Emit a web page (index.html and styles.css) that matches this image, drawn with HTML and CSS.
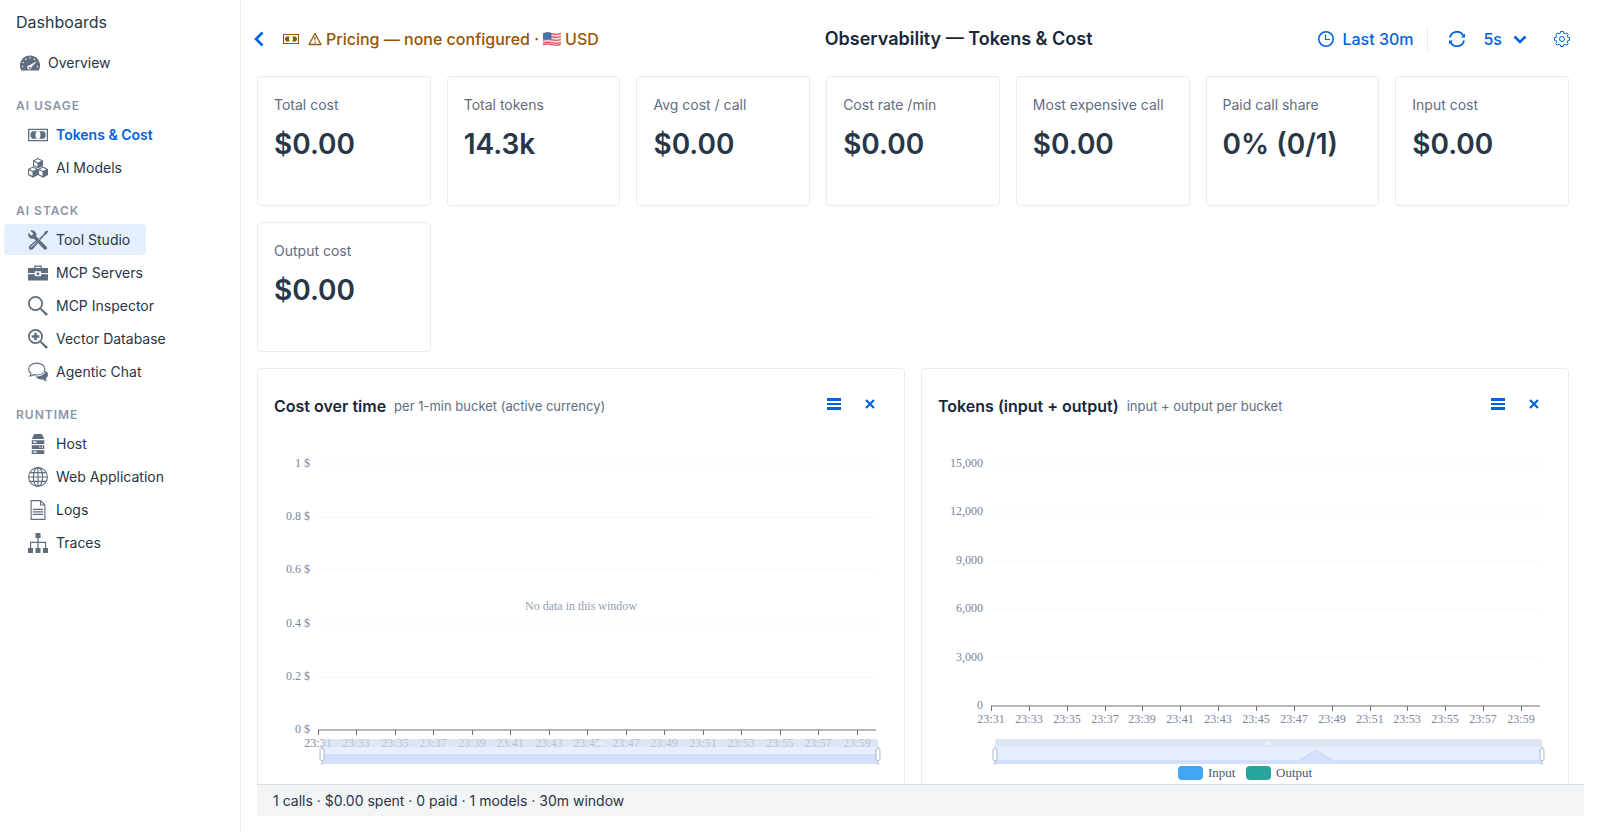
FILE: index.html
```html
<!DOCTYPE html>
<html lang="en">
<head>
    <meta charset="UTF-8">
    <meta name="viewport" content="width=device-width, initial-scale=1.0">
    <title>Observability — Tokens &amp; Cost</title>
    <link rel="stylesheet" href="styles.css">
</head>
<body>
    <aside class="sidebar">
        <h1 class="brand">Dashboards</h1>
        <nav>
            <a href="#overview" class="nav-item top">
                <svg class="icon" viewBox="0 0 16 16"><path d="M8 2a8 8 0 0 0-7.6 10.6c.2.6.5 1.4.5 1.4h14.2s.3-.8.5-1.4A8 8 0 0 0 8 2z"/><g fill="#fff"><circle cx="8" cy="3.8" r=".6"/><circle cx="4.6" cy="5" r=".6"/><circle cx="2.4" cy="7.6" r=".6"/><circle cx="11.4" cy="5" r=".6"/><circle cx="2" cy="10.8" r=".6"/><circle cx="14" cy="10.8" r=".6"/><path d="M13.6 6.4l-4.4 5a1.7 1.7 0 1 1-1.5-1.6z"/></g><circle cx="7.8" cy="11.8" r=".8"/></svg>
                Overview
            </a>

            <h2 class="nav-label">AI USAGE</h2>
            <a href="#tokens" class="nav-item current">
                <svg class="icon" viewBox="0 0 16 16"><path d="M0 3v10h16V3zm15 9H1V4h14z"/><path d="M6 8c0-1.700.6-2.600 1.300-3H3v1H2v4h1v1h4.300C6.600 10.600 6 9.700 6 8zM8.700 5c.7.4 1.300 1.300 1.300 3s-.6 2.600-1.300 3H13v-1h1V6h-1V5z"/></svg>
                Tokens &amp; Cost
            </a>
            <a href="#models" class="nav-item">
                <svg class="icon" viewBox="0 0 16 16"><path d="M8 0l4 2v4.300L8 8.200 4 6.300V2zM4 6.800l4 2v4.700l-4 2.200-4-2.200V8.800zM12 6.800l4 2v4.700l-4 2.200-4-2.200V8.800z"/><g fill="#fff"><path d="M8 .9l2.700 1.300L8 3.500 5.300 2.200zM4.800 3l2.800 1.300v2.700L4.800 5.700zM4 7.700L6.700 9 4 10.300 1.300 9zM.8 9.800l2.800 1.300v3.200L.8 12.900zM12 7.700L14.700 9 12 10.300 9.300 9zM8.800 9.800l2.800 1.300v3.200l-2.800-1.400z"/></g></svg>
                AI Models
            </a>

            <h2 class="nav-label">AI STACK</h2>
            <a href="#tools" class="nav-item hover">
                <svg class="icon" viewBox="0 0 16 16"><path d="M1.700.4L4 2.600 3.700 4 2.500 4.400.3 2.200C-.2 4 .3 5.300 1.300 6.200c1 .9 2.300 1 3.300.6l8.200 8.500a1.400 1.400 0 0 0 2-2L6.500 5c.5-1.200.3-2.500-.6-3.500C4.900.4 3.300 0 1.700.4z"/><path d="M15.300.3l.8.9-1.200 2-1.200.6L9.800 7.900l-1-1 4-4 .5-1.300zM6 8.300l2 2-3.800 4.600c-.8.9-2.100 1.200-3 .4-.9-.9-.7-2.300.2-3z"/><path d="M2.200 13.800l4-3.700" stroke="#e4eefd" stroke-width=".8"/></svg>
                Tool Studio
            </a>
            <a href="#servers" class="nav-item">
                <svg class="icon" viewBox="0 0 16 16"><path d="M5 4V2h6v2h5v4h-5.500V6.500h-5V8H0V4zm1 0h4V3H6zM0 9h5.500v1.500h5V9H16v5H0zM7 7.500h2v2H7z"/></svg>
                MCP Servers
            </a>
            <a href="#inspector" class="nav-item">
                <svg class="icon" viewBox="0 0 16 16"><path d="M6 .7a5.300 5.300 0 1 1 0 10.600A5.300 5.300 0 0 1 6 .7z" fill="none" stroke="currentColor" stroke-width="1.400"/><path d="M9.500 10.500l1-1 5.200 4.600c.5.500-1 2-1.500 1.500z"/></svg>
                MCP Inspector
            </a>
            <a href="#vectors" class="nav-item">
                <svg class="icon" viewBox="0 0 16 16"><path d="M6 .7a5.300 5.300 0 1 1 0 10.600A5.300 5.300 0 0 1 6 .7z" fill="none" stroke="currentColor" stroke-width="1.400"/><path d="M9.500 10.500l1-1 5.200 4.600c.5.500-1 2-1.500 1.500zM5 3h2v2h2v2H7v2H5V7H3V5h2z"/></svg>
                Vector Database
            </a>
            <a href="#chat" class="nav-item">
                <svg class="icon" viewBox="0 0 16 16"><path d="M7 .9c3.700 0 6.500 2 6.500 4.800S10.800 10.400 7 10.400c-.9 0-1.700-.1-2.500-.3-.8.7-1.700 1.100-2.900 1.100.6-.6.900-1.300.8-2C1.200 8.400.5 7.100.5 5.700.5 2.900 3.300.9 7 .9z" fill="none" stroke="currentColor" stroke-width=".9"/><path d="M14.200 7c1.100.7 1.800 1.800 1.800 3 0 1.300-.7 2.300-1.700 3 0 .8.200 1.600.9 2.300-1.300 0-2.400-.6-3-1.400-2.700.3-5.100-.5-6.200-2.300C10 11.700 13.400 10 14.200 7z"/></svg>
                Agentic Chat
            </a>

            <h2 class="nav-label">RUNTIME</h2>
            <a href="#host" class="nav-item">
                <svg class="icon" viewBox="0 0 16 16"><path d="M5 0h6l2 4H3zM3 5h10v3H3zM3 9h10v3H3zM3 13h10v3H3z"/><g fill="#fff"><path d="M4 6h3v1H4zM9 10h1v1H9zM11 10h1v1h-1zM4 14h3v1H4z"/></g></svg>
                Host
            </a>
            <a href="#web" class="nav-item">
                <svg class="icon" viewBox="0 0 16 16"><g fill="none" stroke="currentColor" stroke-width=".9"><circle cx="8" cy="8" r="7.500"/><ellipse cx="8" cy="8" rx="3.700" ry="7.500"/><path d="M8 .5v15M.5 8h15M1.700 4.500h12.600M1.700 11.500h12.600"/></g></svg>
                Web Application
            </a>
            <a href="#logs" class="nav-item">
                <svg class="icon" viewBox="0 0 16 16"><path d="M10 .5H2.500v15h11V4zM10 .5V4h3.500" fill="none" stroke="currentColor" stroke-width=".9"/><path d="M4 7h8v.9H4zM4 9h8v.9H4zM4 11h8v.9H4z"/></svg>
                Logs
            </a>
            <a href="#traces" class="nav-item">
                <svg class="icon" viewBox="0 0 16 16"><path d="M6 0h4v4H8.500v3H14.500v5H16v4h-4v-4h1.600V8H8.500v4H10v4H6v-4h1.500V8H2.500v4H4v4H0v-4h1.600V7h5.900V4H6z"/></svg>
                Traces
            </a>
        </nav>
    </aside>

    <main class="main">
        <header class="toolbar">
            <div class="toolbar-group">
                <button class="btn-back" aria-label="Back">
                    <svg width="10" height="16" viewBox="0 0 10 16"><path d="M8.500 1.500L2 8l6.500 6.500" fill="none" stroke="currentColor" stroke-width="2.600"/></svg>
                </button>
                <button class="btn-pricing">
                    <svg class="money" width="16" height="16" viewBox="0 0 16 16"><path d="M0 3v10h16V3zm15 9H1V4h14z"/><path d="M6 8c0-1.300.5-2 1-2.500H3v1H2v3h1v1h4C6.500 10 6 9.300 6 8zM9 5.500c.5.500 1 1.200 1 2.500s-.5 2-1 2.500h4v-1h1v-3h-1v-1z"/></svg>
                    <svg width="14" height="14" viewBox="0 0 14 14"><path d="M7 1.500L13 12.500H1z" fill="none" stroke="currentColor" stroke-width="1.300" stroke-linejoin="round"/><path d="M6.300 5h1.400l-.3 4h-.8zM6.300 10h1.400v1.300H6.300z"/></svg>
                    <span>Pricing — none configured ·</span>
                    <svg width="18" height="14" viewBox="0 0 18 14"><path d="M0 1.500C4-.5 7 .5 10 1.200s5 .8 8-.7v12c-4 2-7 1-10 .3s-5-.8-8 .7z" fill="#f3dfe2"/><path d="M0 2.300C4 .3 7 1.300 10 2s5 .8 8-.7M0 5.300c4-2 7-1 10-.3s5 .8 8-.7M0 8.300c4-2 7-1 10-.3s5 .8 8-.7M0 11.300c4-2 7-1 10-.3s5 .8 8-.7M0 13c4-1.700 7-.8 10-.1s5 .8 8-.7" fill="none" stroke="#df5f6e" stroke-width="1.300"/><path d="M0 1.500C3 0 6 .2 8.500.9V7.500C5 6.800 3 6.700 0 7.800z" fill="#3d74ad"/></svg>
                    <span>USD</span>
                </button>
            </div>
            <h2 class="page-title">Observability — Tokens &amp; Cost</h2>
            <div class="toolbar-group">
                <button class="btn-range">
                    <svg width="16" height="16" viewBox="0 0 16 16"><circle cx="8" cy="8" r="7.200" fill="none" stroke="currentColor" stroke-width="1.600"/><path d="M7.500 3.500V8.500H12" fill="none" stroke="currentColor" stroke-width="1.200"/></svg>
                    Last 30m
                </button>
                <span class="divider"></span>
                <button class="btn-refresh" aria-label="Refresh">
                    <svg width="16" height="16" viewBox="0 0 16 16"><path d="M1 6.500A7.100 7.100 0 0 1 14.300 4.700M15 9.500A7.100 7.100 0 0 1 1.700 11.300" fill="none" stroke="currentColor" stroke-width="1.800"/><path d="M16 2.500V6.500h-4zM0 13.500V9.500h4z"/></svg>
                </button>
                <button class="btn-interval">
                    5s
                    <svg width="14" height="16" viewBox="0 0 14 16"><path d="M1.500 5.500L7 11l5.500-5.500" fill="none" stroke="currentColor" stroke-width="2.500"/></svg>
                </button>
                <button class="btn-settings" aria-label="Settings">
                    <svg width="16" height="16" viewBox="0 0 16 16"><g fill="none" stroke="currentColor"><path d="M6.600.5h2.800l.4 1.900 1.200.5 1.700-1.100 1.500 1.500-1.100 1.700.5 1.200 1.900.4v2.800l-1.900.4-.5 1.200 1.100 1.700-1.500 1.500-1.700-1.100-1.200.5-.4 1.900H6.600l-.4-1.900-1.200-.5-1.700 1.100-1.500-1.500L2.900 11l-.5-1.200-1.900-.4V6.600l1.900-.4L2.900 5 1.800 3.300l1.500-1.500L5 2.900l1.200-.5z"/><circle cx="8" cy="8" r="2.500"/></g></svg>
                </button>
            </div>
        </header>

        <div class="content">
            <section class="stats">
                <div class="stat"><span class="stat-label">Total cost</span><span class="stat-value">$0.00</span></div>
                <div class="stat"><span class="stat-label">Total tokens</span><span class="stat-value">14.3k</span></div>
                <div class="stat"><span class="stat-label">Avg cost / call</span><span class="stat-value">$0.00</span></div>
                <div class="stat"><span class="stat-label">Cost rate /min</span><span class="stat-value">$0.00</span></div>
                <div class="stat"><span class="stat-label">Most expensive call</span><span class="stat-value">$0.00</span></div>
                <div class="stat"><span class="stat-label">Paid call share</span><span class="stat-value">0% (0/1)</span></div>
                <div class="stat"><span class="stat-label">Input cost</span><span class="stat-value">$0.00</span></div>
                <div class="stat"><span class="stat-label">Output cost</span><span class="stat-value">$0.00</span></div>
            </section>

            <section class="charts">
                <article class="chart-card">
                    <div class="chart-header">
                        <h3>Cost over time</h3>
                        <span class="chart-sub">per 1-min bucket (active currency)</span>
                        <div class="chart-actions">
                            <button aria-label="Menu"><svg width="14" height="14" viewBox="0 0 14 14"><path d="M0 1h14v3H0zM0 6h14v2H0zM0 10h14v3H0z"/></svg></button>
                            <button aria-label="Close"><svg width="10" height="10" viewBox="0 0 10 10"><path d="M1 1l8 8M9 1L1 9" stroke="currentColor" stroke-width="2.200"/></svg></button>
                        </div>
                    </div>
                    <div class="chart" id="costChart"></div>
                </article>
                <article class="chart-card">
                    <div class="chart-header">
                        <h3>Tokens (input + output)</h3>
                        <span class="chart-sub">input + output per bucket</span>
                        <div class="chart-actions">
                            <button aria-label="Menu"><svg width="14" height="14" viewBox="0 0 14 14"><path d="M0 1h14v3H0zM0 6h14v2H0zM0 10h14v3H0z"/></svg></button>
                            <button aria-label="Close"><svg width="10" height="10" viewBox="0 0 10 10"><path d="M1 1l8 8M9 1L1 9" stroke="currentColor" stroke-width="2.200"/></svg></button>
                        </div>
                    </div>
                    <div class="chart" id="tokenChart"></div>
                </article>
            </section>
        </div>

        <footer class="status">1 calls · $0.00 spent · 0 paid · 1 models · 30m window</footer>
    </main>
    <script src="charts.js"></script>
</body>
</html>
```
FILE: styles.css
```css
:root {
    --primary: #0062e0;
    --heading: #18273a;
    --text: #283648;
    --text-light: #5f6d80;
    --label: #8a95a6;
    --border: #e9ebee;
    --warning: #995400;
    --highlight: #e4eefd;
}

* {
    margin: 0;
    padding: 0;
    box-sizing: border-box;
}

body {
    display: flex;
    height: 100vh;
    font-family: Inter, "Liberation Sans", sans-serif;
    font-size: 14px;
    color: var(--text);
    background: white;
}

svg {
    fill: currentColor;
    flex-shrink: 0;
}

button {
    display: flex;
    align-items: center;
    border: none;
    background: none;
    color: var(--primary);
    font: inherit;
    cursor: pointer;
}

/* Sidebar */
.sidebar {
    width: 241px;
    flex-shrink: 0;
    padding: 10px 4px;
    border-right: 1px solid var(--border);
}

.brand {
    margin: 0 12px 13px;
    font-size: 16px;
    font-weight: 400;
    line-height: 24px;
}

.nav-item {
    display: flex;
    align-items: center;
    gap: 8px;
    width: fit-content;
    height: 31px;
    margin-bottom: 2px;
    padding: 0 16px 0 24px;
    border-radius: 4px;
    color: var(--text);
    text-decoration: none;
}

.nav-item.top {
    padding-left: 16px;
}

.nav-item.current {
    color: var(--primary);
    font-weight: 600;
}

.nav-item.hover,
.nav-item:hover {
    background: var(--highlight);
}

.icon {
    width: 20px;
    height: 20px;
    color: var(--text-light);
}

.nav-label {
    margin: 18px 12px 3px;
    color: var(--label);
    font-size: 12px;
    font-weight: 600;
    line-height: 20px;
    letter-spacing: 1px;
}

/* Main column */
.main {
    flex: 1;
    min-width: 0;
    display: flex;
    flex-direction: column;
    padding: 0 16px 16px;
}

.toolbar {
    display: flex;
    align-items: center;
    justify-content: space-between;
    height: 76px;
    flex-shrink: 0;
    padding: 1px 14px 0 0;
    font-size: 16px;
    font-weight: 500;
}

.toolbar-group {
    display: flex;
    align-items: center;
}

.btn-back {
    margin: 0 19px 0 -3px;
}

.btn-pricing {
    gap: 4px;
    color: var(--warning);
}

.money {
    margin-right: 5px;
}

.page-title {
    color: var(--heading);
    font-size: 18px;
    font-weight: 600;
}

.btn-range {
    gap: 8px;
}

.divider {
    width: 1px;
    height: 24px;
    margin: 0 21px 0 14px;
    background: var(--border);
}

.btn-interval {
    gap: 11px;
    margin: 0 27px 0 18px;
}

.content {
    flex: 1;
    min-height: 0;
    padding-right: 15px;
    overflow-y: auto;
    scrollbar-width: none;
}

.stats {
    display: grid;
    grid-template-columns: repeat(auto-fill, minmax(160px, 1fr));
    gap: 16px;
}

.stat {
    display: flex;
    flex-direction: column;
    gap: 9px;
    height: 130px;
    padding: 18px 16px;
    border: 1px solid var(--border);
    border-radius: 4px;
}

.stat-label {
    color: var(--text-light);
    line-height: 20px;
}

.stat-value {
    font-size: 28px;
    font-weight: 600;
    line-height: 40px;
}

.charts {
    display: grid;
    grid-template-columns: 1fr 1fr;
    gap: 16px;
    margin-top: 16px;
}

.chart-card {
    min-width: 0;
    padding: 16px;
    border: 1px solid var(--border);
    border-radius: 4px;
}

.chart-header {
    display: flex;
    align-items: center;
    gap: 8px;
    height: 42px;
}

.chart-header h3 {
    color: var(--heading);
    font-size: 16px;
    font-weight: 600;
}

.chart-sub {
    color: var(--text-light);
    font-size: 13px;
}

.chart-actions {
    display: flex;
    gap: 24px;
    margin: 0 13px 4px auto;
}

.chart {
    height: 358px;
}

.chart text {
    font-family: "Liberation Serif", serif;
    font-size: 12px;
    fill: #77869c;
}

.chart .legend {
    font-size: 13px;
    fill: #4c5a6e;
}

.chart .empty {
    fill: #94a0b0;
}

.chart svg {
    display: block;
}

.status {
    height: 32px;
    flex-shrink: 0;
    padding: 0 16px;
    border-top: 1px solid #d9dee3;
    background: #f2f4f6;
    line-height: 31px;
}
```
FILE: charts.js
```js
const TIMES = [];
for (let m = 31; m < 60; m += 2) TIMES.push('23:' + m);

function text(x, y, value, anchor, cls) {
    return `<text x="${x}" y="${y}" text-anchor="${anchor}" class="${cls || ''}">${value}</text>`;
}

function drawChart(id, opts) {
    const el = document.getElementById(id);
    const width = el.clientWidth;
    const left = opts.left;
    const right = width - 12;
    const top = 37;
    const bottom = opts.bottom;
    let out = '';

    // horizontal grid + y labels
    opts.ticks.forEach((label, i) => {
        const y = Math.round(bottom - (bottom - top) * i / (opts.ticks.length - 1));
        if (i > 0) out += `<path d="M${left} ${y}H${right}" stroke="#f6f7f9"/>`;
        out += text(left - 8, y + 3, label, 'end');
    });

    // x axis
    out += `<path d="M${left} ${bottom}H${right}" stroke="#6e7079"/>`;
    const step = (right - left) / 14.5;
    TIMES.forEach((label, i) => {
        const x = Math.round(left + step * i);
        out += `<path d="M${x + 0.5} ${bottom}v5" stroke="#6e7079"/>`;
        out += text(x, bottom + 17, label, 'middle');
    });

    // zoom slider
    const s0 = left + 4;
    const s1 = right + 2;
    const mid = (s0 + s1) / 2;
    const base = opts.shadowBase;
    const peak = left + step * 8.58;
    const shadow = opts.peak
        ? `M${s0} ${base}H${peak - 18}L${peak} 323L${peak + 18} ${base}H${s1}`
        : `M${s0} ${base}H${s1}`;
    out += `<rect x="${s0}" y="312" width="${s1 - s0}" height="8" rx="2" fill="#d2dbee" opacity=".7"/>
        <rect x="${s0}" y="320" width="${s1 - s0}" height="17" fill="#e7eefd"/>
        <path d="${shadow}V337H${s0}z" fill="#d5e1fc"/>
        <path d="${shadow}" fill="none" stroke="#c5d7fa"/>
        <path d="M${mid - 2} 315v3M${mid} 315v3M${mid + 2} 315v3" stroke="#fff"/>`;
    [s0, s1].forEach(x => {
        out += `<path d="M${x} 319v19" stroke="#acb8d1"/>
            <rect x="${x - 2}" y="321.500" width="4" height="12" rx="1.500" fill="#fff" stroke="#acb8d1"/>`;
    });

    if (opts.empty) out += text(width / 2, 183, opts.empty, 'middle', 'empty');

    if (opts.legend) {
        let x = width / 2 - 67;
        opts.legend.forEach(item => {
            out += `<rect x="${x}" y="339" width="25" height="14" rx="4" fill="${item.color}"/>`;
            out += text(x + 30, 350, item.name, 'start', 'legend');
            x += 68;
        });
    }

    el.innerHTML = `<svg width="${width}" height="358">${out}</svg>`;
}

function drawAll() {
    drawChart('costChart', {
        left: 44,
        bottom: 303,
        ticks: ['0 $', '0.2 $', '0.4 $', '0.6 $', '0.8 $', '1 $'],
        shadowBase: 328,
        empty: 'No data in this window'
    });
    drawChart('tokenChart', {
        left: 53,
        bottom: 279,
        ticks: ['0', '3,000', '6,000', '9,000', '12,000', '15,000'],
        shadowBase: 334,
        peak: true,
        legend: [
            { name: 'Input', color: '#42a5f5' },
            { name: 'Output', color: '#26a69a' }
        ]
    });
}

drawAll();
window.addEventListener('resize', drawAll);
```
